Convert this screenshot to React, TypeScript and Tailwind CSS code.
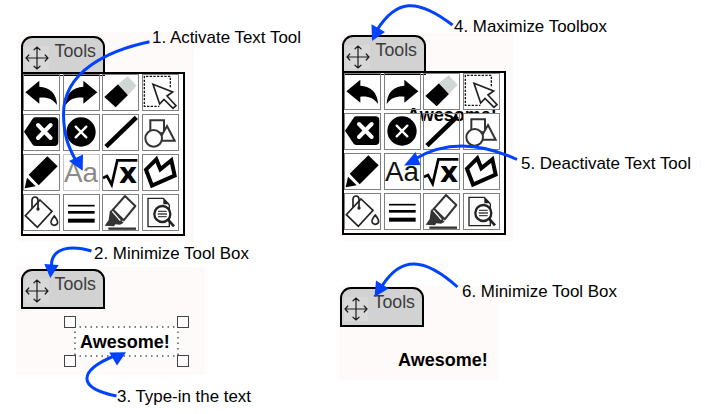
import type { ReactNode } from "react";

const FONT = 'font-["Liberation_Sans",Arial,sans-serif]';

function MoveIcon() {
  return (
    <span className="block h-6 w-6 bg-[#d8d8d8]">
      <svg viewBox="0 0 24 24" className="h-6 w-6" fill="none" stroke="#1c1c1c" strokeWidth="1.2" strokeLinecap="round">
        <path d="M12 1.2V22.8M1 12H23M9 3.8L12 1L15 3.8M9 20.2L12 23L15 20.2M3.8 9L1 12L3.8 15M20.2 9L23 12L20.2 15" />
      </svg>
    </span>
  );
}

function Tab({ open = false }: { open?: boolean }) {
  return (
    <div
      className={`flex w-[84px] items-start rounded-t-[11px] border-2 border-black bg-[#d2d2d2] ${
        open ? "h-9 border-b-0" : "h-10"
      }`}
    >
      <div className="ml-[2px] mt-[8px]">
        <MoveIcon />
      </div>
      <svg className="ml-[5px] mt-[3px] h-5 w-[46px] overflow-visible">
        <text x="0.5" y="16" fontSize="17.5" textLength="41.500" lengthAdjust="spacingAndGlyphs" fill="#3c3c3c">
          Tools
        </text>
      </svg>
    </div>
  );
}

function Cell({
  children,
  solid = false,
  dim = false,
}: {
  children: ReactNode;
  solid?: boolean;
  dim?: boolean;
}) {
  return (
    <div
      className={`relative h-[37px] w-[37px] ${solid ? "bg-white" : ""} ${
        dim ? "outline-[#cfc4c4]" : "outline-[#808080]"
      } outline-1 -outline-offset-1`}
    >
      <svg viewBox="0 0 111 111" className="h-[37px] w-[37px]">
        {children}
      </svg>
    </div>
  );
}

const ARROW = "M7 55L49 20V38C80 40 101 58 102 93C90 76 74 69 49 71V89Z";

function Toolbox({ active = false, ghost = false }: { active?: boolean; ghost?: boolean }) {
  return (
    <div className="w-[164px]">
      <Tab open />
      <div className="relative isolate h-[164px] w-[164px] border-2 border-black bg-white">
        <div className="absolute left-0 top-px h-px w-[82px] bg-black" />
        {ghost && (
          <span className="absolute left-[63px] top-[32px] text-[18px] leading-5 font-bold text-black">Awesome!</span>
        )}
        <div className="grid grid-cols-[40px_39px_40px_37px] auto-rows-[40px] gap-0">
          <Cell>
            <path d={ARROW} />
          </Cell>
          <Cell>
            <path d={ARROW} transform="matrix(-1 0 0 1 110 0)" />
          </Cell>
          <Cell>
            <path d="M48 31L78 63L41 100L7 69Z" />
            <path d="M48 31L77 7L104 35L78 63Z" fill="#d2d5d6" />
          </Cell>
          <Cell solid>
            <path d="M85 40V7H7V97H52" fill="none" stroke="#111" strokeWidth="4" strokeDasharray="7 4" />
            <path d="M33 31L92 54L75 66L102 95L93 103L66 76L53 90Z" fill="white" stroke="#222" strokeWidth="5" />
          </Cell>
          <Cell solid>
            <path d="M3 53L29 14Q32 10 38 10H94Q106 10 106 22V84Q106 96 94 96H38Q32 96 29 92Z" />
            <path d="M45 33L83 72M83 33L45 72" stroke="white" strokeWidth="12" strokeLinecap="round" />
          </Cell>
          <Cell solid>
            <circle cx="54" cy="54" r="44" />
            <path d="M38 38L70 70M70 38L38 70" stroke="white" strokeWidth="7" strokeLinecap="round" />
          </Cell>
          <Cell>
            <path d="M12 98L103 10" stroke="black" strokeWidth="14" />
          </Cell>
          <Cell solid>
            <g fill="white" stroke="#333" strokeWidth="6">
              <path d="M25 19H66V58H25Z" />
              <path d="M75 36L98 80H50Z" />
              <circle cx="35" cy="73" r="25" />
            </g>
          </Cell>
          <Cell>
            <path d="M17 62L73 7L104 37L47 94Z" />
            <path d="M12 71L38 97L5 103Z" />
          </Cell>
          <Cell dim={active}>
            <text
              x="3"
              y="84"
              fontSize="84"
              fill={active ? "#8a8a8a" : "#111"}
              textLength="102"
              lengthAdjust="spacingAndGlyphs"
            >
              Aa
            </text>
          </Cell>
          <Cell>
            <path d="M3 72L15 66L29 92L46 19H106" fill="none" stroke="black" strokeWidth="8" />
            <text x="51" y="88" fontSize="84" fontWeight="bold" className='font-["DejaVu_Sans",sans-serif]'>
              x
            </text>
          </Cell>
          <Cell>
            <path d="M43 16L55 46L88 19L98 65L30 95L12 47Z" fill="none" stroke="black" strokeWidth="12" />
          </Cell>
          <Cell solid>
            <g fill="none" stroke="#222" strokeWidth="5">
              <path d="M51 18L87 52L43 100L7 65Z" />
              <path d="M27 43V18Q28 9 36 9Q45 9 45 19V44" />
              <path d="M94 66Q83 79 84 86Q86 94 94 94Q103 93 104 86Q104 79 94 66Z" />
            </g>
            <circle cx="45" cy="45" r="5" fill="#222" />
          </Cell>
          <Cell solid>
            <path d="M15 35H95" stroke="black" strokeWidth="5" />
            <path d="M15 55H95" stroke="black" strokeWidth="8" />
            <path d="M15 80H95" stroke="black" strokeWidth="12" />
          </Cell>
          <Cell solid>
            <path d="M31 49L69 6L100 36L65 79Z" fill="white" stroke="#333" strokeWidth="6" strokeLinejoin="round" />
            <path d="M24 49L65 86L54 92L40 91L36 97L8 95L20 78Z" fill="#333" />
            <path d="M33 43L66 76L54 85L25 53Z" fill="#333" />
            <path d="M31 52L55 80" stroke="white" strokeWidth="4" />
            <path d="M19 104H102" stroke="#333" strokeWidth="7" />
          </Cell>
          <Cell solid>
            <path d="M82 32V98H18V13H64L82 32" fill="#fafafa" stroke="#222" strokeWidth="4" />
            <path d="M64 13V31H82Z" fill="#222" />
            <circle cx="61" cy="60" r="24" fill="white" stroke="#222" strokeWidth="7" />
            <path d="M78 77L96 97" stroke="#222" strokeWidth="8" />
            <path d="M48 52H74M47 60H75M48 68H74" stroke="#444" strokeWidth="4" />
          </Cell>
        </div>
      </div>
    </div>
  );
}

function Handle({ place }: { place: string }) {
  return <span className={`absolute h-[12px] w-[12px] border border-[#444] bg-white ${place}`} />;
}

function Label({ place, width, children }: { place: string; width: number; children: string }) {
  return (
    <svg className={`absolute h-6 overflow-visible ${place}`} style={{ width }}>
      <text x="0" y="18" fontSize="17" textLength={width} lengthAdjust="spacingAndGlyphs" fill="black">
        {children}
      </text>
    </svg>
  );
}

function Arrows() {
  return (
    <svg viewBox="0 0 705 414" className="pointer-events-none absolute inset-0 h-[414px] w-[705px]">
      <g fill="none" stroke="#0042ff" strokeWidth="3">
        <path d="M149.500 41.800C111 50 63 70 63.500 115C64 136 68 146 76 161" />
        <path d="M91.500 251C72 245 51 247 51.500 266" />
        <path d="M116.500 396C77 388 78 371 114 356" />
        <path d="M452.500 25C416 -3 396 0 377 30" />
        <path d="M517 159.500C479 142 445 141 415 159" />
        <path d="M457.500 287C424 257 401 256 382 286" />
      </g>
      <g fill="#0042ff">
        <path d="M82.700 170.700L69 161L83 154.500Z" />
        <path d="M50.300 278L44.300 264L58.700 265Z" />
        <path d="M126 352.300L109.300 352.500L117 365.500Z" />
        <path d="M372 41L371.500 24.300L385 32Z" />
        <path d="M404 165.500L415.500 152L420.500 165Z" />
        <path d="M374.500 297L376 280.500L388.700 288.500Z" />
      </g>
    </svg>
  );
}

export default function App() {
  return (
    <main className={`relative flex h-[414px] w-[705px] overflow-hidden bg-white ${FONT}`}>
      <section className="flex w-[322px] flex-col pt-8">
        <div className="ml-[18px] h-[210px] w-[176px] bg-[#fffafa] pl-[3px] pt-1">
          <Toolbox active />
        </div>
        <div className="ml-4 mt-[25px] h-[108px] w-[190px] bg-[#fffafa] pl-[5px] pt-[2px]">
          <Tab />
          <div className="relative ml-[53px] mt-[17px] flex h-[31px] w-[105px] items-center bg-white pl-[6px]">
            <svg className="absolute inset-0 h-[31px] w-[105px]" fill="none" stroke="#555" strokeWidth="1.5" strokeDasharray="1.5 4">
              <path d="M0 1H105M0 30H105M1 0V31M104 0V31" />
            </svg>
            <Handle place="-left-[10px] -top-[10px]" />
            <Handle place="-right-[10px] -top-[10px]" />
            <Handle place="-left-[10px] -bottom-[10px]" />
            <Handle place="-right-[10px] -bottom-[10px]" />
            <span className="relative text-[18px] leading-5 font-bold">Awesome!</span>
          </div>
        </div>
      </section>
      <section className="flex flex-col pt-[33px]">
        <div className="ml-[18px] h-[208px] w-[173px] bg-[#fffafa] pl-[2px] pt-[2px]">
          <Toolbox ghost />
        </div>
        <div className="ml-4 mt-[45px] h-[94px] w-[161px] bg-[#fffafa] pl-[2px] pt-px">
          <Tab />
          <p className="ml-[58px] mt-[23px] text-[18px] leading-5 font-bold">Awesome!</p>
        </div>
      </section>
      <Arrows />
      <Label place="left-[152px] top-[25px]" width={149}>1. Activate Text Tool</Label>
      <Label place="left-[94px] top-[241px]" width={155}>2. Minimize Tool Box</Label>
      <Label place="left-[117px] top-[384px]" width={134}>3. Type-in the text</Label>
      <Label place="left-[454px] top-[14px]" width={153}>4. Maximize Toolbox</Label>
      <Label place="left-[521px] top-[151px]" width={170}>5. Deactivate Text Tool</Label>
      <Label place="left-[462px] top-[279px]" width={155}>6. Minimize Tool Box</Label>
    </main>
  );
}
